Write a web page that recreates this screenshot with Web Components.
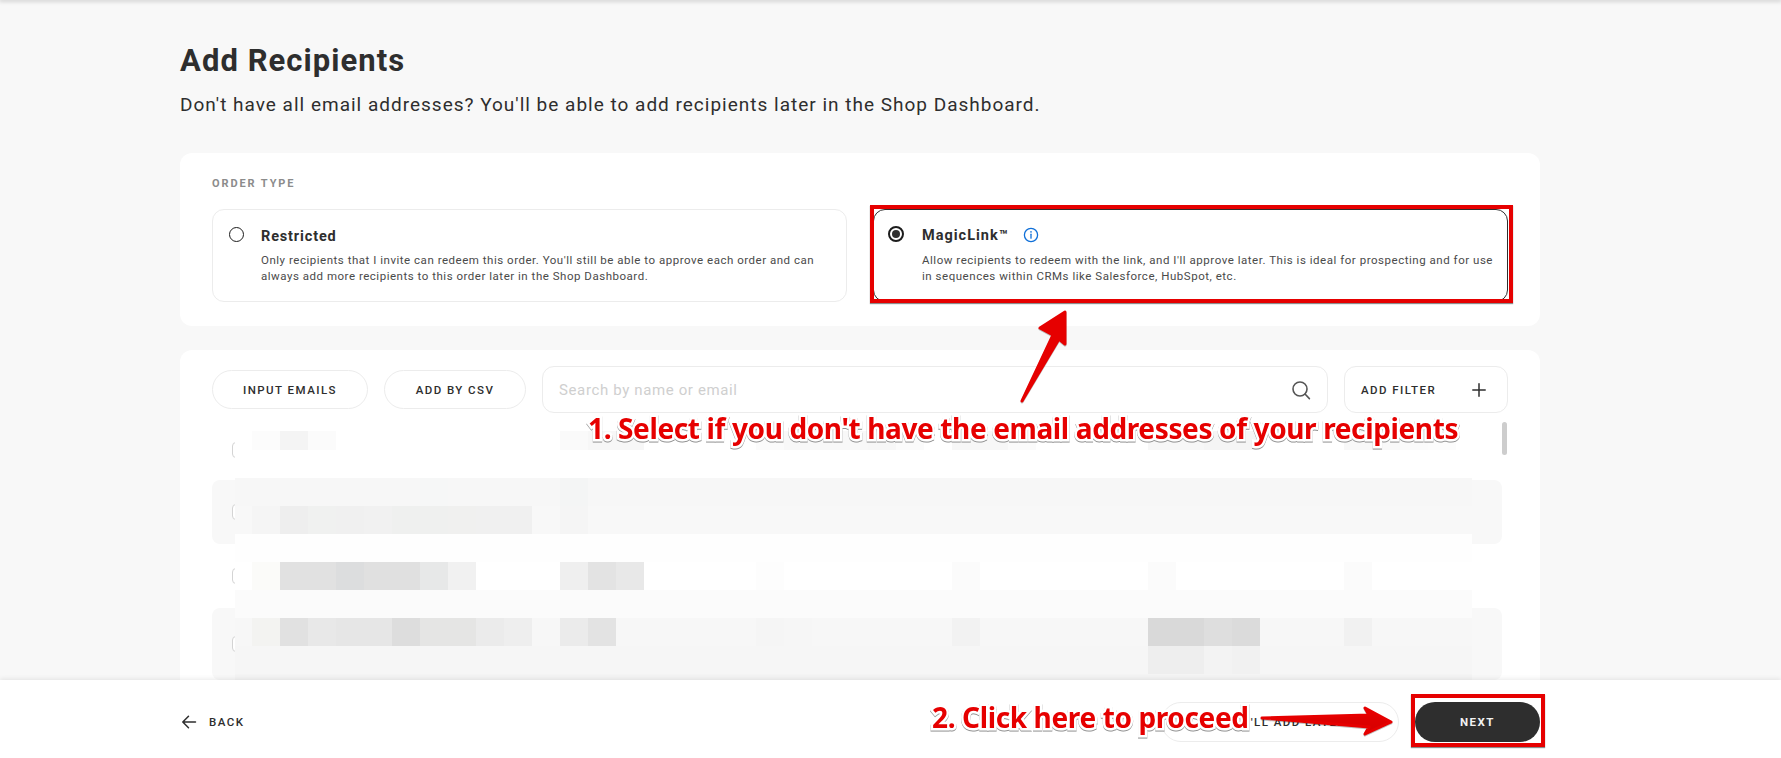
<!DOCTYPE html>
<html lang="en">
<head>
<meta charset="utf-8">
<title>Add Recipients</title>
<style>
html,body{margin:0;padding:0;background:#f8f8f8;}
body{font-family:Roboto,"Liberation Sans",sans-serif;color:#2e2e2e;}
</style>
</head>
<body>
<x-page>
  <x-heading slot="head" title-text="Add Recipients" sub="Don't have all email addresses? You'll be able to add recipients later in the Shop Dashboard."></x-heading>
  <x-card slot="order" style="margin-top:34px;padding:24px 32px">
    <x-eyebrow>ORDER TYPE</x-eyebrow>
    <x-option-grid>
      <x-option label="Restricted">Only recipients that I invite can redeem this order. You'll still be able to approve each order and can always add more recipients to this order later in the Shop Dashboard.</x-option>
      <x-option label="MagicLink™" selected info>Allow recipients to redeem with the link, and I'll approve later. This is ideal for prospecting and for use in sequences within CRMs like Salesforce, HubSpot, etc.</x-option>
    </x-option-grid>
  </x-card>
  <x-card slot="list" style="margin-top:24px;padding:16px 32px 0;height:360px">
    <x-toolbar>
      <x-pill style="width:156px">INPUT EMAILS</x-pill>
      <x-pill style="width:142px">ADD BY CSV</x-pill>
      <x-search placeholder="Search by name or email"></x-search>
      <x-filter>ADD FILTER</x-filter>
    </x-toolbar>
    <x-list>
      <x-row h="60"></x-row>
      <x-row h="64" shaded></x-row>
      <x-row h="64"></x-row>
      <x-row h="72" shaded></x-row>
    </x-list>
  </x-card>
  <x-footer slot="foot">
    <x-back>BACK</x-back>
    <x-pill slot="right" style="width:238px;height:40px;justify-content:flex-start;padding-left:84px;box-sizing:border-box">I'LL ADD LATER</x-pill>
    <x-primary slot="right">NEXT</x-primary>
  </x-footer>
  <x-frame slot="over" style="left:870px;top:205px;width:643px;height:98px"></x-frame>
  <x-frame slot="over" style="left:1411px;top:694px;width:134px;height:53px"></x-frame>
  <x-callout slot="over" style="left:588px;top:409px">1. Select if you don't have the email addresses of your recipients</x-callout>
  <x-callout slot="over" style="left:932px;top:698px">2. Click here to proceed</x-callout>
  <x-arrows slot="over"></x-arrows>
</x-page>
<script>
function def(name, html, extra){
  class C extends HTMLElement{
    constructor(){
      super();
      this.attachShadow({mode:'open'});
      this.shadowRoot.innerHTML = typeof html==='function' ? html(this) : html;
    }
    connectedCallback(){
      if(typeof html==='function') this.shadowRoot.innerHTML = html(this);
      if(extra) extra(this);
    }
  }
  customElements.define(name,C);
}
const FONT='font-family:Roboto,"Liberation Sans",sans-serif;';

def('x-page',`<style>
:host{display:flex;flex-direction:column;position:relative;width:1781px;height:758px;overflow:hidden;background:#f8f8f8;}
.top{height:0;box-shadow:0 0 4px 1px rgba(0,0,0,.28);position:relative;z-index:2}
main{flex:1;min-height:0;overflow:hidden;padding:41px 241px 0 180px;}
</style><div class="top"></div>
<main><slot name="head"></slot><slot name="order"></slot><slot name="list"></slot></main>
<slot name="foot"></slot><slot name="over"></slot>`);

def('x-heading',el=>`<style>
:host{display:block;${FONT}color:#2e2e2e}
h1{margin:0;font-size:31px;line-height:40px;font-weight:700;letter-spacing:1.05px}
p{margin:10px 0 0;font-size:19px;line-height:28px;letter-spacing:1px;white-space:nowrap}
</style><h1>${el.getAttribute('title-text')||''}</h1><p>${el.getAttribute('sub')||''}</p>`);

def('x-card',`<style>:host{display:block;background:#fff;border-radius:12px;width:1296px;}</style><slot></slot>`);

def('x-eyebrow',`<style>:host{display:block;${FONT}font-size:11px;line-height:14px;font-weight:700;letter-spacing:1.9px;color:#8c8c8c}</style><slot></slot>`);

def('x-option-grid',`<style>:host{display:grid;grid-template-columns:635px 635px;gap:26px;margin-top:18px}</style><slot></slot>`);

def('x-option',el=>{
  const sel=el.hasAttribute('selected');
  return `<style>
:host{display:grid;grid-template-columns:48px 1fr;box-sizing:border-box;height:93px;background:#fff;border-radius:12px;
 border:1px solid ${sel?'#2e2e2e':'#ececec'};${FONT}color:#2e2e2e}
.r{box-sizing:border-box;border-radius:50%;margin:${sel?'16px 0 0 14px':'17px 0 0 16px'};width:${sel?16:15}px;height:${sel?16:15}px;border:${sel?2:1.5}px solid #1c1c1c;display:grid;place-items:center}
.r i{display:${sel?'block':'none'};width:8px;height:8px;border-radius:50%;background:#2e2e2e}
.b{padding-top:${sel?16:17}px;min-width:0}
.t{display:flex;align-items:center;gap:14px;font-size:14.5px;line-height:20px;font-weight:700;letter-spacing:${sel?1:.85}px}
.d{margin-top:${sel?6:5}px;padding-right:${sel?12:16}px;font-size:11.5px;line-height:16px;letter-spacing:${sel?.53:.52}px;color:#4a4a4a}
svg{display:block;margin-top:-2px}
</style><div class="r"><i></i></div><div class="b"><div class="t"><span>${el.getAttribute('label')}</span>${el.hasAttribute('info')?`<svg width="16" height="16" viewBox="0 0 16 16" fill="none" stroke="#0f6fd8" stroke-width="1.3"><circle cx="8" cy="8" r="6.6"/><path d="M8 7.2v4" stroke-linecap="round"/><circle cx="8" cy="4.9" r=".8" fill="#0f6fd8" stroke="none"/></svg>`:''}</div><div class="d"><slot></slot></div></div>`;
});

def('x-toolbar',`<style>:host{display:flex;align-items:center;gap:16px}</style><slot></slot>`);

def('x-pill',`<style>:host{display:flex;align-items:center;justify-content:center;height:39px;background:#fff;border:1px solid #ececec;border-radius:22px;box-sizing:border-box;${FONT}font-size:11.5px;font-weight:500;letter-spacing:1.45px;color:#2e2e2e;white-space:nowrap}</style><slot></slot>`);

def('x-search',el=>`<style>
:host{flex:1;display:flex;align-items:center;justify-content:space-between;box-sizing:border-box;height:47px;border:1px solid #ececec;border-radius:12px;padding:1px 16px 0 16px;${FONT}font-size:15px;letter-spacing:.63px;color:#cfcfcf}
svg{display:block}
</style><span>${el.getAttribute('placeholder')}</span><svg width="20" height="20" viewBox="0 0 20 20" fill="none" stroke="#555" stroke-width="1.6"><circle cx="9" cy="9" r="7"/><path d="M14 14l4.4 4.6" stroke-linecap="round"/></svg>`);

def('x-filter',`<style>
:host{display:flex;align-items:center;justify-content:space-between;box-sizing:border-box;width:164px;height:47px;border:1px solid #ececec;border-radius:12px;padding:0 21px 0 16px;${FONT}font-size:11.5px;font-weight:500;letter-spacing:1.45px;color:#2e2e2e}
svg{display:block}
</style><span><slot></slot></span><svg width="14" height="14" viewBox="0 0 14 14" stroke="#2e2e2e" stroke-width="1.5" stroke-linecap="round"><path d="M7 .8v12.4M.8 7h12.4"/></svg>`);

def('x-list',`<style>
:host{display:flex;position:relative;height:260px;margin-top:7px;overflow:hidden}
.rows{width:1290px;flex:none}
.track{width:6px;flex:none}
.thumb{width:5px;margin:2px 0 0 0;height:33px;border-radius:3px;background:#cdcdcd}
</style><div class="rows"><slot></slot></div><div class="track"><div class="thumb"></div></div><x-mosaic></x-mosaic>`);

def('x-row',el=>`<style>
:host{display:flex;align-items:center;height:${el.getAttribute('h')||64}px;padding-left:20px;box-sizing:border-box;border-radius:8px;background:${el.hasAttribute('shaded')?'#f8f8f8':'transparent'}}
i{display:block;width:16px;height:16px;box-sizing:border-box;border:1px solid #d4d4d4;border-radius:4px;background:#fff}
</style><i></i>`);

/* the blurred (pixelated) customer data that lies over the list */
const MOSAIC=[
 {base:'#ffffff',cells:{252:'#fcfcfc',280:'#f4f4f4',308:'#fbfbfb',560:'#fafafa',588:'#f7f7f7',616:'#f7f7f7',756:'#fbfbfb',784:'#f8f8f8',812:'#f8f8f8',840:'#f8f8f8',868:'#f7f7f7',896:'#fbfbfb',952:'#f7f7f7',980:'#f7f7f7',1008:'#fbfbfb',1148:'#f7f7f7',1176:'#f7f7f7',1204:'#f5f5f5',1232:'#f5f5f5',1344:'#f8f8f8',1372:'#f9f9f9',1400:'#fbfbfb',1428:'#fcfcfc'}},
 {base:'#ffffff',cells:{}},
 {base:'#f7f7f7',cells:{420:'#f6f7f7',560:'#f4f5f5'}},
 {base:'#f8f8f8',cells:{252:'#f5f5f5',280:'#eeeeee',308:'#f0f1f0',336:'#f0f0f0',364:'#f1f1f1',392:'#eff0ef',420:'#eff0ef',448:'#f0f0ef',476:'#f0f0f0',504:'#f0f0f0',560:'#f5f5f5'}},
 {base:'#fefefe',cells:{}},
 {base:'#ffffff',cells:{252:'#fbfbf9',280:'#e1e1e1',308:'#e1e1e1',336:'#dcddde',364:'#e0e0e0',392:'#e0e0e0',420:'#e7e8e8',448:'#f1f1f1',560:'#efefef',588:'#e3e3e3',616:'#e8e8e8',756:'#fdfdfd',952:'#fbfbfb',1148:'#fbfbfb',1344:'#fbfbfb'}},
 {base:'#fbfbfb',cells:{}},
 {base:'#f7f7f7',cells:{252:'#f3f3f1',280:'#e1e1e1',308:'#e8e8e8',336:'#e6e6e6',364:'#e6e6e6',392:'#dddddd',420:'#e5e5e4',448:'#e5e5e4',476:'#ebebeb',504:'#eeeeee',560:'#ebebeb',588:'#e3e3e3',756:'#f5f5f5',784:'#f6f6f6',952:'#f2f2f2',1148:'#d9d9d9',1176:'#d9d9d9',1204:'#dedede',1232:'#dbdbdb',1344:'#f1f1f1'}},
 {base:'#f6f6f6',cells:{1148:'#eeeeee',1176:'#eeeeee',1204:'#f3f3f3',1232:'#f1f1f1'}},
 {base:'#f4f4f4',cells:{}}
];
def('x-mosaic',()=>{
  let h='';
  MOSAIC.forEach((r,i)=>{
    h+=`<b style="grid-area:${i+1}/1/${i+2}/-1;background:${r.base}"></b>`;
    for(const x in r.cells){
      const c=(x-252)/28+2;
      h+=`<b style="grid-area:${i+1}/${c};background:${r.cells[x]}"></b>`;
    }
  });
  return `<style>
:host{position:absolute;left:23px;top:11px;display:grid;grid-template-columns:17px repeat(43,28px) 16px;grid-template-rows:19px repeat(8,28px) 6px}
b{display:block}
</style>${h}`;
});

def('x-footer',`<style>
:host{display:flex;align-items:center;justify-content:space-between;box-sizing:border-box;height:78px;flex:none;padding:22px 241px 16px 180px;background:#fff;box-shadow:0 -1px 5px rgba(0,0,0,.09);position:relative;z-index:1}
.r{display:flex;gap:16px}
</style><slot></slot><div class="r"><slot name="right"></slot></div>`);

def('x-back',`<style>
:host{display:flex;align-items:center;gap:12px;${FONT}font-size:11.5px;font-weight:500;letter-spacing:1.45px;color:#2e2e2e}
svg{display:block}
</style><svg width="17" height="16" viewBox="0 0 17 16" fill="none" stroke="#2e2e2e" stroke-width="1.5" stroke-linecap="round" stroke-linejoin="round"><path d="M15.5 8H3M8.5 2.2 2.8 8l5.7 5.8"/></svg><span><slot></slot></span>`);

def('x-primary',`<style>:host{display:flex;align-items:center;justify-content:center;width:125px;height:40px;border-radius:20px;background:#2e2e2e;color:#f2f2f2;${FONT}font-size:11.5px;font-weight:700;letter-spacing:1.5px}</style><slot></slot>`);

def('x-frame',`<style>:host{position:absolute;box-sizing:border-box;border:4px solid #e60000;box-shadow:0 1px 1px rgba(0,0,0,.45);pointer-events:none;z-index:3}</style>`);

def('x-callout',`<style>:host{position:absolute;z-index:4;font-family:"Noto Sans","Open Sans",sans-serif;font-weight:700;font-size:28px;letter-spacing:-.37px;line-height:38px;color:#e60000;white-space:nowrap;-webkit-text-stroke:5px #fff;paint-order:stroke fill;filter:drop-shadow(0 1px 0 #8f8f8f)}</style><slot></slot>`);

def('x-arrows',`<style>:host{position:absolute;left:0;top:0;z-index:5;display:block;width:1781px;height:758px;pointer-events:none}
svg{display:block;filter:drop-shadow(0 1px 0 rgba(0,0,0,.25))}</style>
<svg width="1781" height="758" viewBox="0 0 1781 758">
<defs><linearGradient id="g" x1="0" y1="0" x2="0" y2="1"><stop offset="0" stop-color="#e60000"/><stop offset="1" stop-color="#d40000"/></linearGradient></defs>
<path d="M1022 401 1053 335 1040 328 1065 312 1065 344 1059 339Z" fill="#e60000" stroke="#e60000" stroke-width="3" stroke-linejoin="round"/>
<path d="M1262 718 1369 715 1365 708 1391 722 1365 734 1369 727Z" fill="url(#g)" stroke="#e60000" stroke-width="3" stroke-linejoin="round"/>
</svg>`);
</script>
</body>
</html>
